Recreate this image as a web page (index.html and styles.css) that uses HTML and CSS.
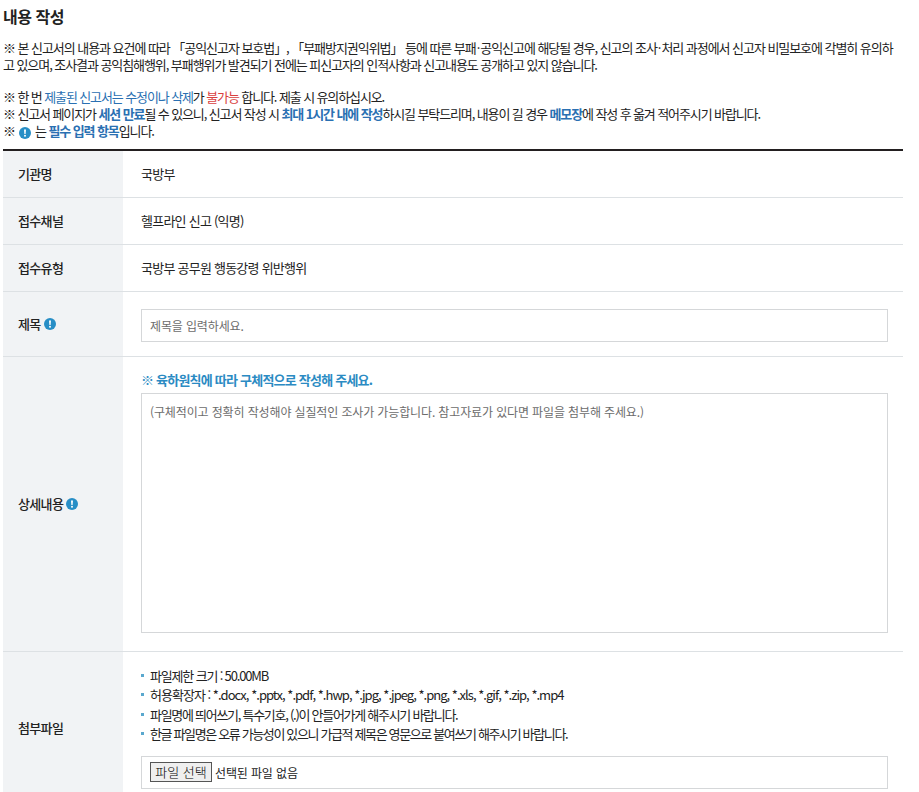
FILE: index.html
```html
<!DOCTYPE html>
<html lang="ko">
<head>
  <meta charset="UTF-8">
  <meta name="viewport" content="width=device-width, initial-scale=1.0">
  <title>내용 작성</title>
  <link rel="stylesheet" href="styles.css">
</head>

<body>
  <svg class="sprite" width="0" height="0">
    <symbol id="required" viewBox="0 0 12 12">
      <circle cx="6" cy="6" r="6" fill="#278ec6"/>
      <path d="M5 2.4h2L6.6 6.9H5.4z" fill="#fff"/>
      <circle cx="6" cy="8.8" r="1" fill="#fff"/>
    </symbol>
  </svg>

  <div class="container">
    <h1>내용 작성</h1>

    <div class="notice">
      <p class="line-law">※ 본 신고서의 내용과 요건에 따라 「공익신고자 보호법」, 「부패방지권익위법」 등에 따른 부패<span class="dot">·</span>공익신고에 해당될 경우, 신고의 조사<span class="dot">·</span>처리 과정에서 신고자 비밀보호에 각별히 유의하</p>
      <p class="line-law2">고 있으며, 조사결과 공익침해행위, 부패행위가 발견되기 전에는 피신고자의 인적사항과 신고내용도 공개하고 있지 않습니다.</p>
      <p class="line-edit">※ 한 번 <span class="blue">제출된 신고서는 수정이나 삭제</span>가 <span class="red">불가능</span> 합니다. 제출 시 유의하십시오.</p>
      <p class="line-time">※ 신고서 페이지가 <strong>세션 만료</strong>될 수 있으니, 신고서 작성 시 <strong>최대 1시간 내에 작성</strong>하시길 부탁드리며, 내용이 길 경우 <strong>메모장</strong>에 작성 후 옮겨 적어주시기 바랍니다.</p>
      <p class="line-required">※ <svg class="icon"><use href="#required"/></svg> 는 <strong>필수 입력 항목</strong>입니다.</p>
    </div>

    <form class="form-table">
      <div class="row">
        <div class="label">기관명</div>
        <div class="field">국방부</div>
      </div>
      <div class="row">
        <div class="label">접수채널</div>
        <div class="field">헬프라인 신고 (익명)</div>
      </div>
      <div class="row">
        <div class="label">접수유형</div>
        <div class="field">국방부 공무원 행동강령 위반행위</div>
      </div>
      <div class="row row-title">
        <div class="label">제목<svg class="icon"><use href="#required"/></svg></div>
        <div class="field"><input type="text" class="input" placeholder="제목을 입력하세요."></div>
      </div>
      <div class="row row-detail">
        <div class="label">상세내용<svg class="icon"><use href="#required"/></svg></div>
        <div class="field">
          <p class="guide">※ 육하원칙에 따라 구체적으로 작성해 주세요.</p>
          <textarea class="input textarea" placeholder="(구체적이고 정확히 작성해야 실질적인 조사가 가능합니다. 참고자료가 있다면 파일을 첨부해 주세요.)"></textarea>
        </div>
      </div>
      <div class="row row-file">
        <div class="label">첨부파일</div>
        <div class="field">
          <ul class="file-info">
            <li class="info-size">파일제한 크기 : 50.00MB</li>
            <li class="info-ext">허용확장자 : *.docx, *.pptx, *.pdf, *.hwp, *.jpg, *.jpeg, *.png, *.xls, *.gif, *.zip, *.mp4</li>
            <li class="info-name">파일명에 띄어쓰기, 특수기호, (.)이 안들어가게 해주시기 바랍니다.</li>
            <li class="info-korean">한글 파일명은 오류 가능성이 있으니 가급적 제목은 영문으로 붙여쓰기 해주시기 바랍니다.</li>
          </ul>
          <div class="input file-box">
            <button type="button" class="file-button">파일 선택</button>
            <span>선택된 파일 없음</span>
          </div>
        </div>
      </div>
    </form>
  </div>
</body>
</html>
```
FILE: styles.css
```css
* {
  box-sizing: border-box;
}

body {
  margin: 0;
  height: 792px;
  overflow: hidden;
  background: #fff;
  color: #222;
  font-family: "Noto Sans CJK KR", sans-serif;
  font-size: 13px;
  letter-spacing: -0.76px;
}

h1,
p,
ul {
  margin: 0;
  padding: 0;
}

.sprite {
  display: block;
}

.container {
  width: 900px;
  margin-left: 3px;
}

h1 {
  padding-top: 4px;
  font-size: 16px;
  line-height: 24px;
  letter-spacing: -0.5px;
}

/* Notice */
.notice {
  padding-top: 11px;
  height: 121px;
  letter-spacing: -1.11px;
  line-height: 17px;
  white-space: nowrap;
}

.line-law {
  letter-spacing: -1.05px;
}

.line-law2 {
  letter-spacing: -1.07px;
}

.line-edit {
  margin-top: 15px;
}

.line-required {
  letter-spacing: -1.1px;
}

.dot {
  margin: 0 1px;
}

.notice strong {
  color: #2a70b2;
}

.blue {
  color: #2a70b2;
}

.red {
  color: #d9413f;
}

.icon {
  width: 12px;
  height: 12px;
  vertical-align: -3px;
}

.label .icon {
  margin-top: 1px;
}

.line-required .icon {
  margin: 0 1px 0 2px;
}

/* Form table */
.form-table {
  border-top: 2px solid #231f20;
}

.row {
  display: flex;
  height: 47px;
  border-bottom: 1px solid #dde1e4;
}

.label {
  display: flex;
  align-items: center;
  gap: 3px;
  width: 120px;
  padding: 0 0 2px 15px;
  background: #f1f3f5;
  font-weight: 500;
  letter-spacing: -0.65px;
}

.field {
  flex: 1;
  display: flex;
  flex-direction: column;
  justify-content: center;
  padding: 0 15px 2px 18px;
}

.row-title {
  height: 65px;
}

.row-title .field {
  padding-top: 4px;
}

.row-detail {
  height: 295px;
}

.row-detail .field {
  padding-bottom: 4px;
}

.row-file {
  height: 154px;
}

.input {
  display: block;
  width: 100%;
  height: 33px;
  padding: 0 8px;
  border: 1px solid #d5d7d9;
  border-radius: 0;
  background: #fff;
  font-family: inherit;
  font-size: 12px;
  letter-spacing: -0.13px;
}

.input::placeholder {
  color: #6c6c6c;
}

.textarea {
  height: 240px;
  padding-top: 9px;
  resize: none;
}

.guide {
  padding-bottom: 4px;
  color: #2b8bc3;
  font-weight: 700;
  letter-spacing: -0.78px;
  line-height: 18px;
}

/* File upload */
.row-file .field {
  justify-content: flex-start;
  padding-top: 14px;
}

.file-info {
  list-style: none;
  line-height: 19.4px;
}

.file-info li {
  display: flex;
  align-items: center;
  white-space: pre;
}

.file-info li::before {
  content: "";
  width: 3px;
  height: 3px;
  margin: 0 6px 1px 0;
  background: #5aa8ce;
}

.info-size {
  letter-spacing: -1.17px;
}

.info-ext {
  letter-spacing: -0.98px;
}

.info-name {
  letter-spacing: -1.28px;
}

.info-korean {
  letter-spacing: -1.36px;
}

.file-box {
  display: flex;
  align-items: center;
  gap: 3px;
  flex-shrink: 0;
  margin-top: 12px;
  letter-spacing: -0.13px;
}

.file-button {
  width: 62px;
  height: 20px;
  padding: 0;
  border: 1px solid #555;
  border-radius: 0;
  background: #efefef;
  color: #000;
  font-family: inherit;
  font-size: 13px;
  font-weight: 300;
  line-height: 16px;
}
```
